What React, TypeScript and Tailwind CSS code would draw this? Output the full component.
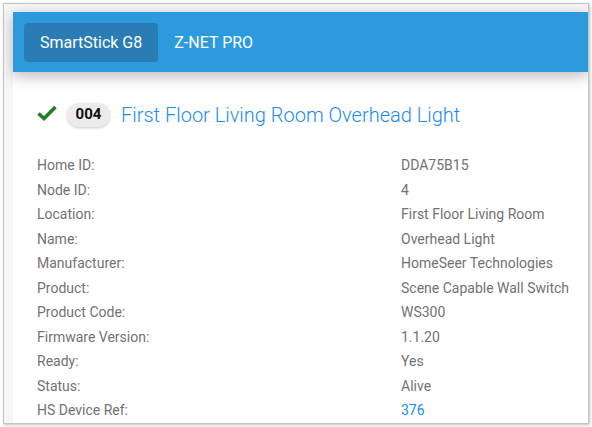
const rows: [string, string, boolean?][] = [
  ["Home ID:", "DDA75B15"],
  ["Node ID:", "4"],
  ["Location:", "First Floor Living Room"],
  ["Name:", "Overhead Light"],
  ["Manufacturer:", "HomeSeer Technologies"],
  ["Product:", "Scene Capable Wall Switch"],
  ["Product Code:", "WS300"],
  ["Firmware Version:", "1.1.20"],
  ["Ready:", "Yes"],
  ["Status:", "Alive"],
  ["HS Device Ref:", "376", true],
];

export default function App() {
  return (
    <div
      className="w-[592px] h-[427px] bg-white overflow-hidden pl-[3px] pt-[3px]"
      style={{ fontFamily: "Roboto, 'Liberation Sans', sans-serif" }}
    >
      <div className="w-[586px] h-[421px] border border-[#c4c4c4] shadow-[1px_1px_3px_rgba(0,0,0,0.25)] bg-[#f6f6f6] pl-[9px] pt-[8px] overflow-hidden">
        <div className="h-full bg-white flex flex-col">
          {/* Top bar */}
          <div className="h-[60px] bg-[#2d9ade] flex items-start pl-[11px] pt-[11px] shadow-[0_4px_14px_rgba(0,0,0,0.28)] relative z-10">
            <div className="h-[39px] px-4 flex items-center rounded-[4px] bg-[#2a7db4] text-white text-[16px]">
              SmartStick G8
            </div>
            <div className="h-[39px] px-4 flex items-center text-white text-[16px]">
              Z-NET PRO
            </div>
          </div>

          {/* Device header */}
          <div className="flex items-center pl-[24px] pt-[24px] h-[82px] pb-[20px]">
            <svg width="20" height="16" viewBox="0 0 20 16" className="mt-[-4px]">
              <path d="M1.5 8.5 L7 13.5 L18.5 2" fill="none" stroke="#1f7d24" strokeWidth="3.6" />
            </svg>
            <div className="ml-[10px] h-[24px] w-[43px] rounded-full bg-[#ebebeb] shadow-[0_1px_3px_rgba(0,0,0,0.2)] flex items-center justify-center text-[15px] font-bold text-[#111]">
              004
            </div>
            <div className="ml-[11px] text-[20px] font-light text-[#1a8cf0]">
              First Floor Living Room Overhead Light
            </div>
          </div>

          {/* Details */}
          <div className="pl-[24px] text-[14px] text-[#727272]">
            {rows.map(([label, value, link]) => (
              <div key={label} className="flex h-[24.5px] items-center">
                <div className="w-[364px]">{label}</div>
                <div className={link ? "text-[#1a8cf0]" : ""}>{value}</div>
              </div>
            ))}
          </div>
        </div>
      </div>
    </div>
  );
}
